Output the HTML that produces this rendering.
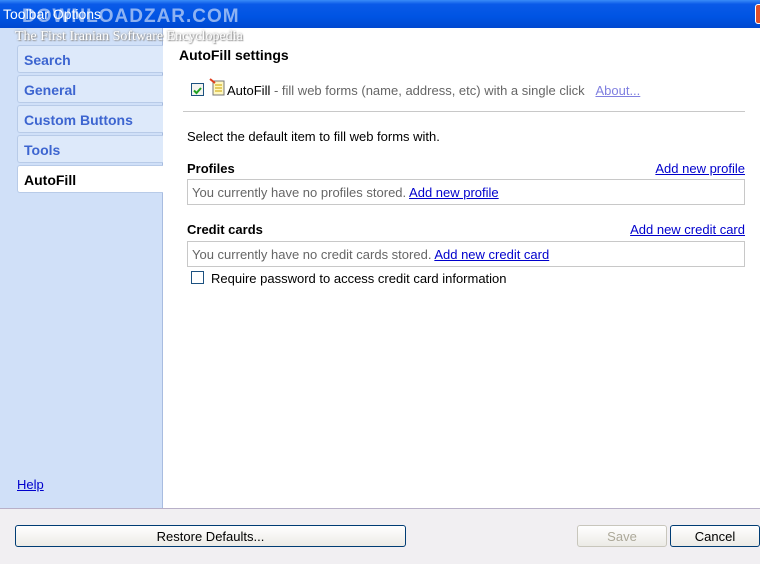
<!DOCTYPE html>
<html><head><style>
*{margin:0;padding:0;box-sizing:border-box}
body{width:760px;height:564px;overflow:hidden;background:#fff;font-family:"Liberation Sans",Arial,sans-serif;font-size:13px;position:relative}
.title{position:absolute;left:0;top:0;width:760px;height:28px;background:linear-gradient(#3a8cf8 0,#0a5ae8 15%,#0054e3 60%,#0048d0 100%)}
.title span{position:absolute;left:3px;top:6px;color:#fff;font-size:14px}
.wm1{position:absolute;left:22px;top:6px;color:rgba(255,255,255,.55);font-weight:bold;font-size:19px;letter-spacing:1px}
.wm2{position:absolute;left:15px;top:29px;color:#fff;font-family:"Liberation Serif",serif;font-size:14px;text-shadow:0 0 2px #888,1px 1px 1px #999}
.close{position:absolute;left:755px;top:4px;width:8px;height:20px;background:#e0502a;border:1px solid #fff;border-radius:3px}
.side{position:absolute;left:0;top:28px;width:163px;height:480px;background:#d0e0f8;border-right:1px solid #a8bce0}
.tab{position:absolute;left:17px;width:146px;height:28px;background:#dde9fa;border:1px solid #b8cbe8;border-right:none;border-radius:3px 0 0 3px;color:#3d65d0;font-weight:bold;font-size:14px;padding:6px 0 0 6px}
.tab.sel{background:#fff;color:#000}
.help{position:absolute;left:17px;top:477px;color:#00c;text-decoration:underline;font-size:13px}
.bottom{position:absolute;left:0;top:508px;width:760px;height:56px;background:#f1eff2;border-top:1px solid #b8b0c8}
.btn{position:absolute;top:525px;height:22px;border:1px solid #003c74;border-radius:3px;background:linear-gradient(#fff,#ecebe6);text-align:center;font-size:13px;padding-top:3px}
a{color:#00c;text-decoration:underline}
.t{position:absolute}
.box{position:absolute;left:187px;width:558px;height:26px;border:1px solid #c8c8c8;color:#666;padding:5px 0 0 4px}
.cb{position:absolute;width:13px;height:13px;border:1px solid #1c5180;background:#f4f4f0}
</style></head><body>
<div class="title"><span>Toolbar Options</span><div class="wm1">DOWNLOADZAR.COM</div><div class="close"></div></div>
<div class="side">
<div class="tab" style="top:17px">Search</div>
<div class="tab" style="top:47px">General</div>
<div class="tab" style="top:77px">Custom Buttons</div>
<div class="tab" style="top:107px">Tools</div>
<div class="tab sel" style="top:137px">AutoFill</div>
</div>
<div class="wm2">The First Iranian Software Encyclopedia</div>
<a class="help" href="#">Help</a>
<div class="t" style="left:179px;top:47px;font-weight:bold;font-size:14px">AutoFill settings</div>
<div class="cb" style="left:191px;top:83px"><svg width="11" height="11" viewBox="0 0 11 11"><path d="M2 5.5l2.5 2.5 4.5-5" stroke="#21a121" stroke-width="2" fill="none"/></svg></div>
<svg class="t" style="left:209px;top:78px" width="18" height="18" viewBox="0 0 18 18"><rect x="4" y="3" width="11" height="14" fill="#fff8c0" stroke="#777"/><path d="M6 7h7M6 10h7M6 13h7" stroke="#c9a000"/><path d="M1 1l5 4" stroke="#e04020" stroke-width="2"/></svg>
<div class="t" style="left:227px;top:83px;color:#666"><span style="color:#000">AutoFill</span> - fill web forms (name, address, etc) with a single click &nbsp;&nbsp;<a href="#" style="color:#8080e0">About...</a></div>
<div class="t" style="left:183px;top:111px;width:562px;border-top:1px solid #c8c8c8"></div>
<div class="t" style="left:187px;top:129px">Select the default item to fill web forms with.</div>
<div class="t" style="left:187px;top:161px;font-weight:bold">Profiles</div>
<a class="t" href="#" style="right:15px;top:161px">Add new profile</a>
<div class="box" style="top:179px">You currently have no profiles stored. <a href="#">Add new profile</a></div>
<div class="t" style="left:187px;top:222px;font-weight:bold">Credit cards</div>
<a class="t" href="#" style="right:15px;top:222px">Add new credit card</a>
<div class="box" style="top:241px">You currently have no credit cards stored. <a href="#">Add new credit card</a></div>
<div class="cb" style="left:191px;top:271px;background:#fff"></div>
<div class="t" style="left:211px;top:271px">Require password to access credit card information</div>
<div class="bottom"></div>
<div class="btn" style="left:15px;width:391px">Restore Defaults...</div>
<div class="btn" style="left:577px;width:90px;border-color:#c8c6bc;color:#aca899">Save</div>
<div class="btn" style="left:670px;width:90px">Cancel</div>
</body></html>
